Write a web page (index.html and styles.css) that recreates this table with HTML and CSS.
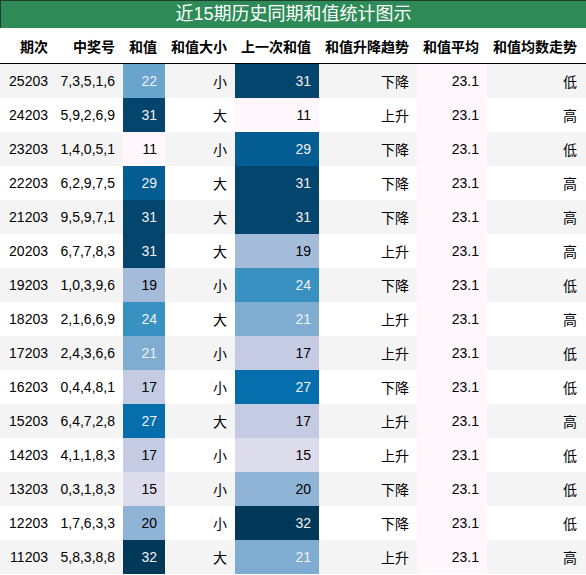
FILE: index.html
```html
<!DOCTYPE html>
<html lang="zh">
<head>
    <meta charset="utf-8">
    <title>近15期历史同期和值统计图示</title>
    <link rel="stylesheet" href="styles.css">
</head>
<body>
    <div class="chart">
        <div class="chart-title">近15期历史同期和值统计图示</div>
        <table class="stats">
            <colgroup>
                <col class="c-issue">
                <col class="c-nums">
                <col class="c-sum">
                <col class="c-size">
                <col class="c-prev">
                <col class="c-trend">
                <col class="c-avg">
                <col class="c-avgtrend">
            </colgroup>
            <thead>
                <tr>
                    <th>期次</th>
                    <th>中奖号</th>
                    <th>和值</th>
                    <th>和值大小</th>
                    <th>上一次和值</th>
                    <th>和值升降趋势</th>
                    <th>和值平均</th>
                    <th>和值均数走势</th>
                </tr>
            </thead>
            <tbody>
                <tr><td>25203</td><td>7,3,5,1,6</td><td class="v22">22</td><td>小</td><td class="v31">31</td><td>下降</td><td class="avg">23.1</td><td>低</td></tr>
                <tr><td>24203</td><td>5,9,2,6,9</td><td class="v31">31</td><td>大</td><td class="v11">11</td><td>上升</td><td class="avg">23.1</td><td>高</td></tr>
                <tr><td>23203</td><td>1,4,0,5,1</td><td class="v11">11</td><td>小</td><td class="v29">29</td><td>下降</td><td class="avg">23.1</td><td>低</td></tr>
                <tr><td>22203</td><td>6,2,9,7,5</td><td class="v29">29</td><td>大</td><td class="v31">31</td><td>下降</td><td class="avg">23.1</td><td>高</td></tr>
                <tr><td>21203</td><td>9,5,9,7,1</td><td class="v31">31</td><td>大</td><td class="v31">31</td><td>下降</td><td class="avg">23.1</td><td>高</td></tr>
                <tr><td>20203</td><td>6,7,7,8,3</td><td class="v31">31</td><td>大</td><td class="v19">19</td><td>上升</td><td class="avg">23.1</td><td>高</td></tr>
                <tr><td>19203</td><td>1,0,3,9,6</td><td class="v19">19</td><td>小</td><td class="v24">24</td><td>下降</td><td class="avg">23.1</td><td>低</td></tr>
                <tr><td>18203</td><td>2,1,6,6,9</td><td class="v24">24</td><td>大</td><td class="v21">21</td><td>上升</td><td class="avg">23.1</td><td>高</td></tr>
                <tr><td>17203</td><td>2,4,3,6,6</td><td class="v21">21</td><td>小</td><td class="v17">17</td><td>上升</td><td class="avg">23.1</td><td>低</td></tr>
                <tr><td>16203</td><td>0,4,4,8,1</td><td class="v17">17</td><td>小</td><td class="v27">27</td><td>下降</td><td class="avg">23.1</td><td>低</td></tr>
                <tr><td>15203</td><td>6,4,7,2,8</td><td class="v27">27</td><td>大</td><td class="v17">17</td><td>上升</td><td class="avg">23.1</td><td>高</td></tr>
                <tr><td>14203</td><td>4,1,1,8,3</td><td class="v17">17</td><td>小</td><td class="v15">15</td><td>上升</td><td class="avg">23.1</td><td>低</td></tr>
                <tr><td>13203</td><td>0,3,1,8,3</td><td class="v15">15</td><td>小</td><td class="v20">20</td><td>下降</td><td class="avg">23.1</td><td>低</td></tr>
                <tr><td>12203</td><td>1,7,6,3,3</td><td class="v20">20</td><td>小</td><td class="v32">32</td><td>下降</td><td class="avg">23.1</td><td>低</td></tr>
                <tr><td>11203</td><td>5,8,3,8,8</td><td class="v32">32</td><td>大</td><td class="v21">21</td><td>上升</td><td class="avg">23.1</td><td>高</td></tr>
            </tbody>
        </table>
    </div>
</body>
</html>
```

FILE: styles.css
```css
body {
    margin: 0;
    background-color: #fff;
    font-family: "Liberation Sans", Arial, "Noto Sans CJK SC", sans-serif;
}

.chart {
    width: 586px;
}

.chart-title {
    height: 27px;
    line-height: 27px;
    background-color: #2e8b57;
    border-top: 1px solid #1f3d2b;
    border-left: 1px solid #1f3d2b;
    color: #fff;
    font-size: 18px;
    text-align: center;
    font-family: "Liberation Sans", "Noto Sans CJK SC", sans-serif;
}

.stats {
    width: 586px;
    border-collapse: collapse;
    table-layout: fixed;
    font-size: 14px;
    color: #000;
}

.c-issue { width: 58px; }
.c-nums { width: 65px; }
.c-sum { width: 42px; }
.c-size { width: 70px; }
.c-prev { width: 84px; }
.c-trend { width: 98px; }
.c-avg { width: 70px; }
.c-avgtrend { width: 99px; }

.stats th {
    height: 35px;
    padding: 0 8px 0 0;
    text-align: right;
    font-weight: bold;
    font-size: 14px;
    border-bottom: 1px solid #000;
    white-space: nowrap;
}

.stats td {
    height: 34px;
    padding: 0 8px 0 0;
    text-align: right;
    white-space: nowrap;
}

.stats th:first-child,
.stats td:first-child {
    padding-right: 10px;
}

.stats th:last-child,
.stats td:last-child {
    padding-right: 9px;
}

.stats tbody tr:nth-child(odd) {
    background-color: #f4f4f4;
}

.stats td.avg {
    background-color: #fff7fb;
}

/* PuBu gradient over the sums (11 .. 32) */
.v11 { background-color: #fff7fb; }
.v15 { background-color: #dddcec; }
.v17 { background-color: #c4cbe3; }
.v19 { background-color: #a4bcda; }
.v20 { background-color: #90b4d6; }
.v21 { background-color: #7eadd1; color: #f1f1f1; }
.v22 { background-color: #68a4cc; color: #f1f1f1; }
.v24 { background-color: #3991c1; color: #f1f1f1; }
.v27 { background-color: #056ead; color: #f1f1f1; }
.v29 { background-color: #045d92; color: #f1f1f1; }
.v31 { background-color: #03456c; color: #f1f1f1; }
.v32 { background-color: #023858; color: #f1f1f1; }
```
